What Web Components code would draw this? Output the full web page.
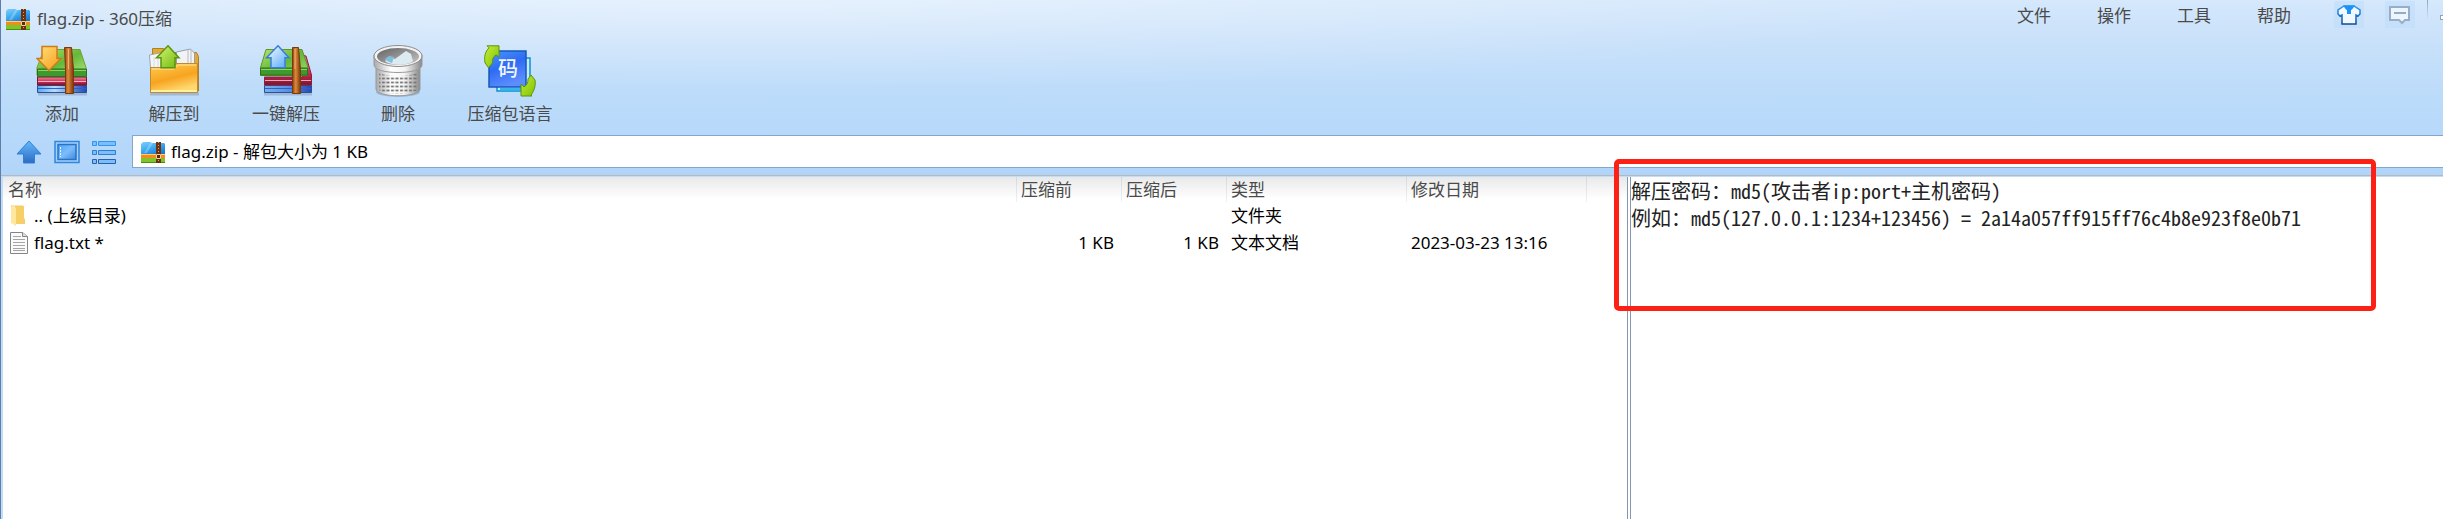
<!DOCTYPE html>
<html lang="zh-CN">
<head>
<meta charset="utf-8">
<title>flag.zip - 360压缩</title>
<style>
  html, body { margin: 0; height: 100%; }
  body { font: 17px/24px "Noto Sans", "Noto Sans CJK SC", sans-serif; color: #4a4a4a; background: #fff; overflow: hidden; }
</style>
</head>
<body>
<zip-window></zip-window>

<script>
const ICONS = {
  zip: `<svg viewBox="0 0 24 22"><defs><linearGradient id="b" x2=".6" y2="1"><stop stop-color="#7fd0fb"/><stop offset=".5" stop-color="#3eaaf0"/><stop offset="1" stop-color="#1479d0"/></linearGradient></defs>
    <path d="M0 3l2-2h7l2 1h12l1 1v12H0z" fill="url(#b)"/><path d="M0 13h24v5H0z" fill="#f58a1f"/><path d="M0 13h24v1H0z" fill="#ffd06a"/><path d="M0 17h24v4l-1 1H1l-1-1z" fill="#7cc628"/><path d="M0 21.500h24" stroke="#4b8c12"/>
    <path d="M3 12l6-10h3L6 12z" fill="#fff" opacity=".25"/><path d="M15 1h5v21h-5z" fill="#6d3213"/><path d="M17.500 1v20" stroke="#e0a060" stroke-dasharray="1 2"/><path d="M15.500 13.500h4v4h-4z" fill="#5a2a10" stroke="#f1d59b"/></svg>`,
  books: `<svg viewBox="0 0 52 52"><defs><linearGradient id="g" x2="1" y2="1"><stop stop-color="#b6e86b"/><stop offset=".5" stop-color="#63b83a"/><stop offset="1" stop-color="#b2e680"/></linearGradient><linearGradient id="r" y2="1" x2="0"><stop stop-color="#f0839b"/><stop offset=".6" stop-color="#c72c50"/><stop offset="1" stop-color="#7d1430"/></linearGradient><linearGradient id="bl" x2="1"><stop stop-color="#5aa8f2"/><stop offset=".35" stop-color="#b5dcff"/><stop offset="1" stop-color="#2349b5"/></linearGradient><linearGradient id="br" x2="1"><stop stop-color="#8e430c"/><stop offset=".4" stop-color="#dc8a3d"/><stop offset="1" stop-color="#7b3507"/></linearGradient><linearGradient id="o" y2="1" x2="1"><stop stop-color="#ffe27a"/><stop offset="1" stop-color="#f79a1c"/></linearGradient></defs>
    <path d="M2 49h49" stroke="#8298b5" stroke-width="3" opacity=".5"/>
    <path d="M1.500 40.500h49v7h-49z" fill="url(#bl)" stroke="#2b4f9d"/><path d="M2 43.500h48" stroke="#2e62bf"/>
    <path d="M1.500 32h49v8h-49z" fill="url(#r)" stroke="#7a1730"/><path d="M2 36.500h48" stroke="#f6b0be"/>
    <path d="M8 4.500h36l6 18v8h-49v-8z" fill="url(#g)" stroke="#71a22b"/><path d="M1.500 24h49v7.500h-49z" fill="#3f9a2d" stroke="#2c701c"/><path d="M2 25.500h48" stroke="#8fd368"/>
    <path d="M28.500 2.500h7l2 22v24h-8v-24z" fill="url(#br)" stroke="#7b3808"/><path d="M32.500 4v20" stroke="#f0b071"/>
    <path d="M6 1.500h15v12h4l-12 12-12-12h5z" fill="url(#o)" stroke="#cf7c18" stroke-width="1.500"/></svg>`,
  folder: `<svg viewBox="0 0 52 52"><defs><linearGradient id="f" y2="1" x2=".4"><stop stop-color="#ffce53"/><stop offset=".6" stop-color="#f7a420"/><stop offset="1" stop-color="#ffd970"/></linearGradient><linearGradient id="ga" x2="1" y2="1"><stop stop-color="#d8f77a"/><stop offset="1" stop-color="#6eb80a"/></linearGradient></defs>
    <path d="M2 49h49" stroke="#8298b5" stroke-width="3" opacity=".5"/>
    <path d="M4.500 46V3.500h11l3 4h30l2 4V46z" fill="#e4a931" stroke="#ae8129"/><path d="M1.500 10l15-3v16h-14z" fill="#f5f6f8" stroke="#9fa5ae"/><path d="M28.500 24V7l14-3 4 4v14z" fill="#f2f3f5" stroke="#999fa8"/><path d="M40 5v16M43 5v16" stroke="#b5bbc4"/><path d="M6 12v10M10 11v11" stroke="#d6dade"/>
    <path d="M2.500 22.500h22l4-4h21v29h-47z" fill="url(#f)" stroke="#c3892c"/><path d="M4 24h22l4-4h18" stroke="#ffe79a" fill="none"/><path d="M3 46h46" stroke="#fff09a" stroke-width="2"/>
    <path d="M20 .8l11 12h-4v10H13v-10H8.500z" fill="url(#ga)" stroke="#5a9412" stroke-width="1.500"/></svg>`,
  extract: `<svg viewBox="0 0 52 52"><defs><linearGradient id="g" x2="1" y2="1"><stop stop-color="#b6e86b"/><stop offset=".5" stop-color="#63b83a"/><stop offset="1" stop-color="#a6de70"/></linearGradient><linearGradient id="r" y2="1" x2="0"><stop stop-color="#f0839b"/><stop offset=".6" stop-color="#c72c50"/><stop offset="1" stop-color="#7d1430"/></linearGradient><linearGradient id="bl" x2="1"><stop stop-color="#78b2ef"/><stop offset=".5" stop-color="#5992e4"/><stop offset="1" stop-color="#2349b5"/></linearGradient><linearGradient id="br" x2="1"><stop stop-color="#8e430c"/><stop offset=".4" stop-color="#dc8a3d"/><stop offset="1" stop-color="#7b3507"/></linearGradient><linearGradient id="ab" y2="1" x2="1"><stop stop-color="#fff"/><stop offset="1" stop-color="#4ba5fb"/></linearGradient></defs>
    <path d="M4 49h48" stroke="#8298b5" stroke-width="3" opacity=".5"/>
    <path d="M4.500 40.500h47v7h-47z" fill="url(#bl)" stroke="#2b4f9d"/><path d="M5 43.500h46" stroke="#2e62bf"/>
    <path d="M42 10l4 1 5.500 19v10h-47v-8h38z" fill="url(#r)" stroke="#8d1f3c"/><path d="M5 35.500h46" stroke="#f3a7b6"/>
    <path d="M6 4.500h36l6 18-1 8H.5v-8z" fill="url(#g)" stroke="#62942a"/><path d="M.5 23h47v7H.5z" fill="#3f9a2d" stroke="#2c701c"/><path d="M1 24.500h46" stroke="#8fd368"/>
    <path d="M32.500 2.500h6l2 22v24h-8v-24z" fill="url(#br)" stroke="#7b3808"/><path d="M35 4v20" stroke="#f0b071"/>
    <path d="M18 .8l11 12h-4v10H11v-10H6.500z" fill="url(#ab)" stroke="#3b7dda" stroke-width="1.500"/></svg>`,
  bin: `<svg viewBox="0 0 52 52"><defs><linearGradient id="m" x2="1"><stop stop-color="#a9a9a9"/><stop offset=".35" stop-color="#fff"/><stop offset=".65" stop-color="#f4f4f4"/><stop offset="1" stop-color="#898989"/></linearGradient><pattern id="d" width="4.500" height="4" patternUnits="userSpaceOnUse"><path d="M1 1.500h3" stroke="#777" stroke-width="1.800"/></pattern><linearGradient id="in" y2="1" x2="1"><stop stop-color="#626262"/><stop offset="1" stop-color="#c7c7c7"/></linearGradient></defs>
    <ellipse cx="26" cy="47" rx="22" ry="5" fill="#7188a6" opacity=".4"/>
    <path d="M4 20h44v24c0 9-44 9-44 0z" fill="url(#m)" stroke="#999"/><path d="M7 28c8 4 30 4 38 0v17c-8 5-30 5-38 0z" fill="url(#d)"/>
    <path d="M2 10v10c0 10 48 10 48 0V10z" fill="url(#m)" stroke="#9a9a9a"/>
    <ellipse cx="26" cy="11" rx="24" ry="10.500" fill="#f3f3f3" stroke="#8d8d8d"/><ellipse cx="26" cy="11.500" rx="21" ry="8.500" fill="url(#in)"/>
    <path d="M13 16l5-4 5 2 11-8 5 3 2 7c-6 5-22 5-28 0z" fill="#dcebf1"/><path d="M13 14l4-3 5 1-2 6-5-2z" fill="#84bedf"/></svg>`,
  lang: `<svg viewBox="0 0 52 52"><defs><linearGradient id="lb" y2="1" x2=".4"><stop stop-color="#4a95fb"/><stop offset=".5" stop-color="#2f6bf2"/><stop offset="1" stop-color="#5b8dff"/></linearGradient><linearGradient id="lg" x2="1" y2="1"><stop stop-color="#c3ef3b"/><stop offset="1" stop-color="#80c000"/></linearGradient></defs>
    <path d="M13 13h33v33H13z" fill="#c7ecff" stroke="#0d8ed7" stroke-width="1.500"/><path d="M16 44h28" stroke="#35b6ed" stroke-width="2"/>
    <path d="M5 6h37v36H5z" fill="url(#lb)" stroke="#1559bd" stroke-width="1.500"/>
    <text x="24" y="31" font-family="Noto Sans CJK SC, sans-serif" font-size="20" font-weight="500" text-anchor="middle" fill="#f2f7ff">码</text>
    <path d="M3 .8h12v11l-3-2c-3 2-4 5-3.500 8l-4 5-3.500-5c-1-6 0-11 4-15z" fill="url(#lg)" stroke="#5b9412"/>
    <path d="M47 30l4 5c1 6-1 11-4 15l1 1H37V39l3 3c3-2 4-4 4-8z" fill="url(#lg)" stroke="#5b9412"/></svg>`,
  up: `<svg viewBox="0 0 26 26"><defs><linearGradient id="u" y2="1" x2="0"><stop stop-color="#63b8ff"/><stop offset="1" stop-color="#2c6dc0"/></linearGradient></defs><path d="M13 2l12 13h-6.500v9h-11v-9H1z" fill="url(#u)" stroke="#2f7fd6"/></svg>`,
  pane: `<svg viewBox="0 0 26 26"><defs><linearGradient id="p" y2="1" x2="1"><stop stop-color="#46a5f8"/><stop offset=".5" stop-color="#7dbdfb"/><stop offset="1" stop-color="#3e87dc"/></linearGradient></defs><path d="M1 2.500h24v21H1z" fill="#a4d0fb" stroke="#2f86dc" stroke-width="1.500"/><path d="M4 5.500h18v15H4z" fill="url(#p)" stroke="#2b72c4" stroke-width="1.500"/><path d="M6.500 8v10" stroke="#e9f5ff" stroke-dasharray="2 1"/></svg>`,
  list: `<svg viewBox="0 0 26 26" fill="#7cbefa"><path d="M.5 2.500h4v4h-4zM6.500 2.500h17v4h-17z" stroke="#2f97f1"/><path d="M.5 11.500h4v4h-4zM6.500 11.500h17v4h-17z" stroke="#2d7dd0"/><path d="M.5 20.500h4v4h-4zM6.500 20.500h17v4h-17z" stroke="#2a61a8"/></svg>`,
  shirt: `<svg viewBox="0 0 24 20"><defs><linearGradient id="s" y2="1" x2="0"><stop stop-color="#2a9cf8"/><stop offset="1" stop-color="#134a96"/></linearGradient></defs><path d="M7 1h10l6 4v4l-2 2-2-1v9H5v-9l-2 1-2-2V5z" fill="#f1f8ff" stroke="url(#s)" stroke-width="1.500"/><path d="M6 .5h12l-3 4-1 .5v4h-4V5l-1-.5z" fill="#1c93f5"/></svg>`,
  chat: `<svg viewBox="0 0 24 20"><path d="M2 2h19v13h-4l-3 3-3-3H2z" fill="#edf6ff" stroke="#98aec8" stroke-width="2"/><path d="M6 8h12" stroke="#93abc7" stroke-width="2"/></svg>`,
  dir: `<svg viewBox="0 0 18 22"><path d="M5 1h9v12l1 1v5H5z" fill="#f6cf68"/><path d="M1 1l5 2v18l-5-3z" fill="#ffe7a0"/><path d="M1 1h12" stroke="#f3ca62"/></svg>`,
  txt: `<svg viewBox="0 0 18 22"><path d="M.5.5h12l5 4v17H.5z" fill="#fafafa" stroke="#858585"/><path d="M12.500.5v4h5" fill="#ddd" stroke="#858585"/><path d="M3 4.500h8M3 7.500h12M3 10.500h12M3 13.500h12M3 16.500h12M3 18.500h12" stroke="#a4a4a4"/></svg>`
};

function define(name, html) {
  const template = document.createElement('template');
  template.innerHTML = html;
  customElements.define(name, class extends HTMLElement {
    constructor() {
      super();
      this.attachShadow({ mode: 'open' }).append(template.content.cloneNode(true));
    }
  });
}

customElements.define('zip-icon', class extends HTMLElement {
  connectedCallback() {
    if (this.shadowRoot) return;
    this.attachShadow({ mode: 'open' }).innerHTML =
      `<style>:host{display:block;flex:none}svg{display:block;width:100%;height:100%}</style>${ICONS[this.getAttribute('name')]}`;
  }
});

define('tool-button', `
  <style>
    :host { display: block; width: 112px; }
    button { all: unset; box-sizing: border-box; width: 100%; display: flex; flex-direction: column; align-items: center; gap: 5px; white-space: nowrap; }
    ::slotted(zip-icon) { width: 52px; height: 52px; }
  </style>
  <button type="button"><slot name="icon"></slot><span><slot></slot></span></button>`);

define('menu-button', `
  <style>
    :host { display: block; width: 80px; }
    button { all: unset; display: block; width: 100%; text-align: center; line-height: 32px; }
  </style>
  <button type="button"><slot></slot></button>`);

define('icon-button', `
  <style>
    :host { display: block; }
    button { all: unset; display: grid; place-items: center; width: 100%; height: 100%; }
    ::slotted(zip-icon) { width: var(--icon-w, 26px); height: var(--icon-h, 26px); }
  </style>
  <button type="button"><slot></slot></button>`);

define('title-bar', `
  <style>
    :host { display: flex; justify-content: space-between; align-items: flex-start; height: 45px; }
    .title, nav { display: flex; }
    .title { align-items: center; gap: 7px; padding: 7px 0 0 5px; }
    .title zip-icon { width: 24px; height: 22px; }
    h1 { font: inherit; margin: 0; }
    .extras { display: flex; gap: 21px; padding: 1px 0 0 20px; }
    icon-button { width: 30px; height: 27px; background: #b9dafa66; --icon-w: 24px; --icon-h: 20px; }
    .edge { display: flex; align-items: flex-end; justify-content: flex-end; box-sizing: border-box; width: 16px; height: 20px; margin-left: 12px;
      background: linear-gradient(#8fa6bf, #fff0) left / 1px 100% no-repeat; }
    .edge i { width: 3px; height: 5px; border: 1px solid #8b9fb6; border-right: 0; background: #fff; box-sizing: border-box; border-radius: 1px 0 0 1px; }
  </style>
  <div class="title"><zip-icon name="zip"></zip-icon><h1>flag.zip - 360压缩</h1></div>
  <nav>
    <menu-button>文件</menu-button><menu-button>操作</menu-button><menu-button>工具</menu-button><menu-button>帮助</menu-button>
    <div class="extras">
      <icon-button><zip-icon name="shirt"></zip-icon></icon-button>
      <icon-button><zip-icon name="chat"></zip-icon></icon-button>
    </div>
    <div class="edge"><i></i></div>
  </nav>`);

define('tool-bar', `
  <style>:host { display: flex; padding-left: 5px; height: 90px; }</style>
  <tool-button><zip-icon slot="icon" name="books"></zip-icon>添加</tool-button>
  <tool-button><zip-icon slot="icon" name="folder"></zip-icon>解压到</tool-button>
  <tool-button><zip-icon slot="icon" name="extract"></zip-icon>一键解压</tool-button>
  <tool-button><zip-icon slot="icon" name="bin"></zip-icon>删除</tool-button>
  <tool-button><zip-icon slot="icon" name="lang"></zip-icon>压缩包语言</tool-button>`);

define('address-bar', `
  <style>
    :host { display: flex; align-items: center; padding-bottom: 7px; }
    .nav { display: flex; gap: 12px; padding: 0 14px 0 15px; }
    icon-button { width: 26px; height: 26px; }
    label { flex: 1; display: flex; align-items: center; gap: 6px; height: 33px; box-sizing: border-box; padding-left: 8px; background: #fff; border: 1px solid #86a5cb; border-right: 0; }
    label zip-icon { width: 24px; height: 22px; }
    input { flex: 1; border: 0; padding: 0; outline: 0; font: inherit; line-height: 24px; color: #000; background: none; }
  </style>
  <div class="nav">
    <icon-button><zip-icon name="up"></zip-icon></icon-button>
    <icon-button><zip-icon name="pane"></zip-icon></icon-button>
    <icon-button><zip-icon name="list"></zip-icon></icon-button>
  </div>
  <label><zip-icon name="zip"></zip-icon><input type="text" readonly aria-label="路径" value="flag.zip - 解包大小为 1 KB"></label>`);

define('file-list', `
  <style>
    :host { display: block; min-width: 0; background: linear-gradient(#e9e9e9, #fff) top / 100% 22px no-repeat #fff; }
    table { width: 100%; table-layout: fixed; border-collapse: collapse; color: #000; }
    col.size { width: 105px; } col.wide { width: 180px; } col.rest { width: 41px; }
    th, td { padding: 0 5px; height: 27px; text-align: left; font-weight: 400; white-space: nowrap; box-sizing: border-box; }
    th { height: 25px; color: #4a4a4a; }
    th + th { background: linear-gradient(#d2d7de, #f2f2f2) left / 1px 100% no-repeat; }
    td.num { text-align: right; padding-right: 7px; }
    .name { display: flex; align-items: center; gap: 6px; padding-left: 2px; }
    .name zip-icon { width: 18px; height: 22px; }
  </style>
  <table>
    <colgroup><col><col class="size"><col class="size"><col class="wide"><col class="wide"><col class="rest"></colgroup>
    <thead><tr><th>名称</th><th>压缩前</th><th>压缩后</th><th>类型</th><th>修改日期</th><th></th></tr></thead>
    <tbody>
      <tr><td><div class="name"><zip-icon name="dir"></zip-icon>.. (上级目录)</div></td><td></td><td></td><td>文件夹</td><td></td><td></td></tr>
      <tr><td><div class="name"><zip-icon name="txt"></zip-icon>flag.txt *</div></td><td class="num">1 KB</td><td class="num">1 KB</td><td>文本文档</td><td>2023-03-23 13:16</td><td></td></tr>
    </tbody>
  </table>`);

define('comment-pane', `
  <style>
    :host { display: block; position: relative; min-width: 0; background: #fff; border-left: 4px double #8496b0; }
    pre { margin: 0; padding: 0; font: 20px/27px "Noto Sans Mono CJK SC", "Liberation Mono", "Noto Sans CJK SC", monospace; color: #222; }
    .mark { position: absolute; left: -17px; top: -18px; right: 67px; height: 152px; box-sizing: border-box; border: 5px solid #fd2014; border-radius: 5px; }
  </style>
  <pre><slot></slot></pre>
  <div class="mark"></div>`);

define('zip-window', `
  <style>
    :host { display: flex; flex-direction: column; min-height: 100vh; border-left: 1px solid #5d7ea8; box-sizing: border-box; background: #b9d9f8; }
    header { border-bottom: 1px solid #b3babf;
      background: radial-gradient(ellipse 50% 90px at 30% 0, #ffffff66, #fff0), linear-gradient(#d5e8fc, #c9e1fa 40px, #bddcfa 90px, #b1d5fa); }
    main { flex: 1; display: grid; grid-template-columns: 199fr 100fr; border-top: 1px solid #c6dcf0; border-left: 2px solid #c3ddf7; }
  </style>
  <header><title-bar></title-bar><tool-bar></tool-bar><address-bar></address-bar></header>
  <main>
    <file-list></file-list>
    <comment-pane>解压密码：md5(攻击者ip:port+主机密码)<br>例如：md5(127.0.0.1:1234+123456) = 2a14a057ff915ff76c4b8e923f8e0b71</comment-pane>
  </main>`);
</script>
</body>
</html>
